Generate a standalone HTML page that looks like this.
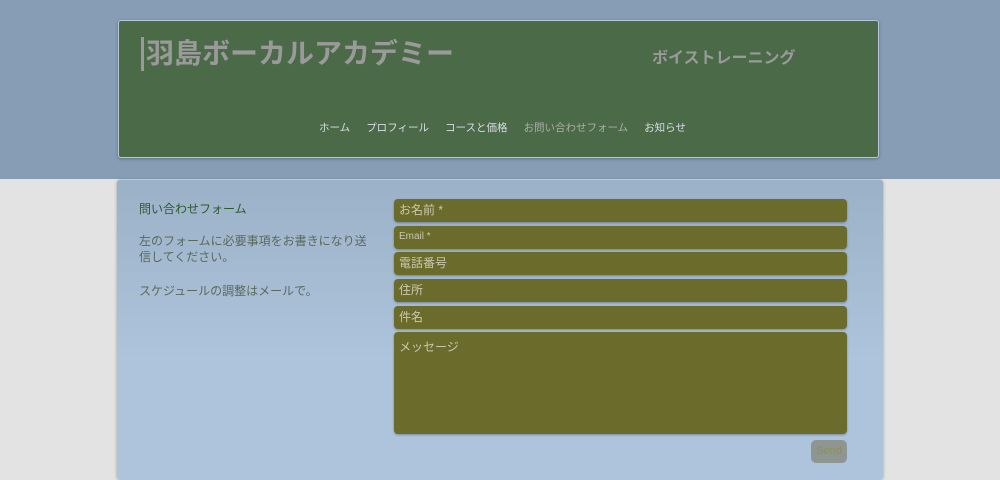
<!DOCTYPE html>
<html><head><meta charset="utf-8"><style>
body{margin:0;width:1000px;height:469px;overflow:hidden;background:#e3e3e3;font-family:"Liberation Sans","Noto Sans CJK JP",sans-serif;position:relative}
.top{position:absolute;left:0;top:0;width:1000px;height:179px;background:#879db5}
.hdr{position:absolute;left:118px;top:20px;width:759px;height:136px;background:#4a6a48;border:1px solid #b8c8d8;border-radius:3px;box-shadow:0 1px 3px rgba(0,0,0,.3)}
.title{position:absolute;left:22px;top:16px;font-size:28px;font-weight:bold;color:#9a9a9a;border-left:3px solid #9a9a9a;padding-left:2px;line-height:34px}
.sub{position:absolute;left:533px;top:23px;font-size:16px;font-weight:bold;color:#9a9a9a}
.nav{position:absolute;left:200px;top:99px;font-size:10.5px;color:#d8dde2;white-space:nowrap}
.nav span{margin-right:16px}
.panel{position:absolute;left:117px;top:180px;width:766px;height:300px;background:linear-gradient(#9bb1c7,#adc4dc 60%);border-radius:3px;box-shadow:0 0 3px rgba(0,0,0,.3)}
.l{position:absolute;left:22px;color:#5a6a5a;font-size:12px;line-height:16px}
.f{position:absolute;left:277px;width:453px;height:23px;background:#6b6b2c;border-radius:4px;color:#c8c8b0;font-size:12px;line-height:22px;box-sizing:border-box;padding-left:5px;box-shadow:0 1px 2px rgba(0,0,0,.3)}
.send{position:absolute;left:694px;top:260px;width:36px;height:23px;background:#8f9590;border-radius:5px;color:#8c8f60;font-size:11px;text-align:center;line-height:23px}
</style></head><body>
<div class="top"></div>
<div class="hdr">
<div class="title">羽島ボーカルアカデミー</div>
<div class="sub">ボイストレーニング</div>
<div class="nav"><span>ホーム</span><span>プロフィール</span><span>コースと価格</span><span style="color:#a8b0a8">お問い合わせフォーム</span><span>お知らせ</span></div>
</div>
<div class="panel">
<div class="l" style="top:21px;color:#2d5a2d">問い合わせフォーム</div>
<div class="l" style="top:53px;width:232px">左のフォームに必要事項をお書きになり送信してください。</div>
<div class="l" style="top:103px">スケジュールの調整はメールで。</div>
<div class="f" style="top:19px">お名前 *</div>
<div class="f" style="top:46px;font-size:10px">Email *</div>
<div class="f" style="top:72px">電話番号</div>
<div class="f" style="top:99px">住所</div>
<div class="f" style="top:126px">件名</div>
<div class="f" style="top:152px;height:102px;line-height:30px">メッセージ</div>
<div class="send">Send</div>
</div>
</body></html>
